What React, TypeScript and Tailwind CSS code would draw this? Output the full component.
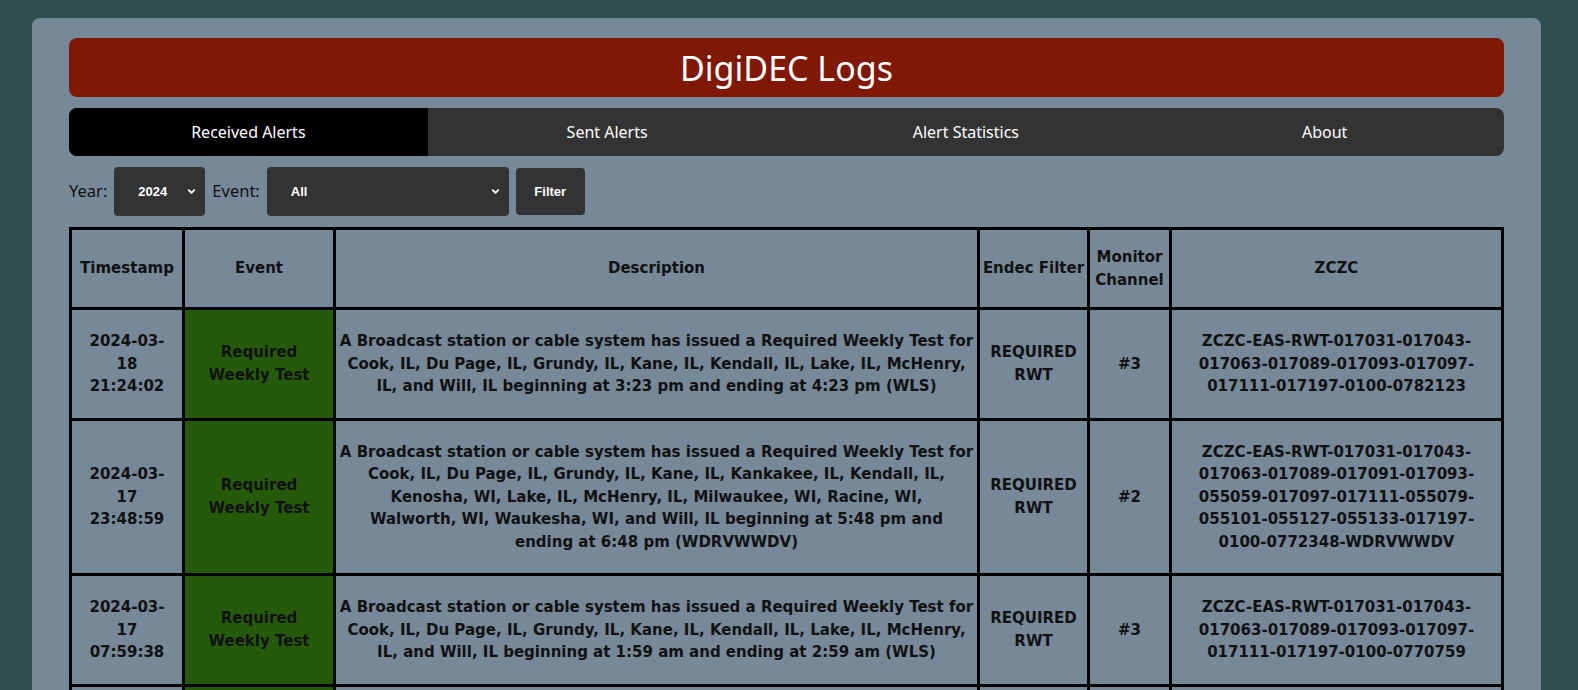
import { ChevronDown } from 'lucide-react'

const tabs = ['Received Alerts', 'Sent Alerts', 'Alert Statistics', 'About']

const rows = [
  {
    date: '2024-03-',
    day: '18',
    clock: '21:24:02',
    event: 'Required Weekly Test',
    desc: [
      'A Broadcast station or cable system has issued a Required Weekly Test for',
      'Cook, IL, Du Page, IL, Grundy, IL, Kane, IL, Kendall, IL, Lake, IL, McHenry,',
      'IL, and Will, IL beginning at 3:23 pm and ending at 4:23 pm (WLS)',
    ],
    filter: 'REQUIRED RWT',
    channel: '#3',
    zczc: 'ZCZC-EAS-RWT-017031-017043-017063-017089-017093-017097-017111-017197-0100-0782123',
  },
  {
    date: '2024-03-',
    day: '17',
    clock: '23:48:59',
    event: 'Required Weekly Test',
    desc: [
      'A Broadcast station or cable system has issued a Required Weekly Test for',
      'Cook, IL, Du Page, IL, Grundy, IL, Kane, IL, Kankakee, IL, Kendall, IL,',
      'Kenosha, WI, Lake, IL, McHenry, IL, Milwaukee, WI, Racine, WI,',
      'Walworth, WI, Waukesha, WI, and Will, IL beginning at 5:48 pm and',
      'ending at 6:48 pm (WDRVWWDV)',
    ],
    filter: 'REQUIRED RWT',
    channel: '#2',
    zczc: 'ZCZC-EAS-RWT-017031-017043-017063-017089-017091-017093-055059-017097-017111-055079-055101-055127-055133-017197-0100-0772348-WDRVWWDV',
  },
  {
    date: '2024-03-',
    day: '17',
    clock: '07:59:38',
    event: 'Required Weekly Test',
    desc: [
      'A Broadcast station or cable system has issued a Required Weekly Test for',
      'Cook, IL, Du Page, IL, Grundy, IL, Kane, IL, Kendall, IL, Lake, IL, McHenry,',
      'IL, and Will, IL beginning at 1:59 am and ending at 2:59 am (WLS)',
    ],
    filter: 'REQUIRED RWT',
    channel: '#3',
    zczc: 'ZCZC-EAS-RWT-017031-017043-017063-017089-017093-017097-017111-017197-0100-0770759',
  },
  {
    date: '2024-03-',
    day: '16',
    clock: '21:10:11',
    event: 'Required Weekly Test',
    desc: [
      'A Broadcast station or cable system has issued a Required Weekly Test for',
      'Cook, IL, Du Page, IL, Grundy, IL, Kane, IL, Kendall, IL, Lake, IL, McHenry,',
      'IL, and Will, IL beginning at 3:10 pm and ending at 4:10 pm (WLS)',
    ],
    filter: 'REQUIRED RWT',
    channel: '#3',
    zczc: 'ZCZC-EAS-RWT-017031-017043-017063-017089-017093-017097-017111-017197-0100-0762110',
  },
]

// zczc strings break after each dash, like the browser does
const breakDashes = (s: string) => s.replace(/-/g, '-\u200B')

function Select({ value, width }: { value: string; width: string }) {
  return (
    <div className={`relative h-[49px] ${width}`}>
      <div className="flex h-full items-center rounded-[4px] bg-[#333333] pl-[24px] text-[13px] font-bold text-white [font-family:Arial,'Liberation_Sans',sans-serif]">
        {value}
      </div>
      <ChevronDown className="absolute right-[8px] top-[19px] h-[11px] w-[11px] text-white" strokeWidth={4} />
    </div>
  )
}

export default function App() {
  return (
    <div className="min-h-screen bg-[#2f4f4f] pl-[32px] pr-[37px] pt-[18px] [font-family:'Segoe_UI','Noto_Sans',sans-serif]">
      <div className="rounded-t-[8px] bg-[#778899] px-[37px] pt-[20px] pb-[30px]">
        {/* Title */}
        <div className="flex h-[59px] items-center justify-center rounded-[8px] bg-[#801806]">
          <h1 className="text-[34px] leading-none text-white [font-family:'Noto_Sans',sans-serif]">DigiDEC Logs</h1>
        </div>

        {/* Tabs */}
        <nav className="mt-[11px] grid h-[48px] grid-cols-4 overflow-hidden rounded-[8px] bg-[#333333]">
          {tabs.map((t, i) => (
            <div
              key={t}
              className={`flex items-center justify-center text-[16px] text-white ${i === 0 ? 'bg-black' : ''}`}
            >
              {t}
            </div>
          ))}
        </nav>

        {/* Filter row */}
        <div className="mt-[11px] flex items-center gap-[7px] text-[16.5px] text-[#111]">
          <span>Year:</span>
          <Select value="2024" width="w-[91px]" />
          <span>Event:</span>
          <Select value="All" width="w-[242px]" />
          <button className="h-[47px] w-[69px] rounded-[4px] bg-[#333333] text-[13px] font-bold text-white [font-family:Arial,'Liberation_Sans',sans-serif]">
            Filter
          </button>
        </div>

        {/* Table */}
        <table className="mt-[11px] w-full table-fixed border-collapse border-[3px] border-black text-center text-[15px] font-bold leading-[22.5px] text-[#111] [font-family:'DejaVu_Sans',Verdana,sans-serif]">
          <colgroup>
            <col className="w-[113px]" />
            <col className="w-[151px]" />
            <col className="w-[644px]" />
            <col className="w-[110px]" />
            <col className="w-[82px]" />
            <col />
          </colgroup>
          <thead>
            <tr>
              {['Timestamp', 'Event', 'Description', 'Endec Filter', 'Monitor Channel', 'ZCZC'].map((h) => (
                <th key={h} className="border-[3px] border-black px-0 py-[16px] font-bold">
                  {h}
                </th>
              ))}
            </tr>
          </thead>
          <tbody>
            {rows.map((r) => (
              <tr key={r.zczc}>
                <td className="border-[3px] border-black px-[4px] py-[20px]">
                  {r.date}
                  <br />
                  {r.day}
                  <br />
                  {r.clock}
                </td>
                <td className="border-[3px] border-black bg-[#265a0b] px-[6px] py-[20px]">{r.event}</td>
                <td className="border-[3px] border-black px-0 py-[20px]">
                  {r.desc.map((line) => (
                    <div key={line} className="whitespace-nowrap">
                      {line}
                    </div>
                  ))}
                </td>
                <td className="border-[3px] border-black px-[4px] py-[20px]">{r.filter}</td>
                <td className="border-[3px] border-black px-[4px] py-[20px]">{r.channel}</td>
                <td className="border-[3px] border-black px-[10px] py-[20px]">{breakDashes(r.zczc)}</td>
              </tr>
            ))}
          </tbody>
        </table>
      </div>
    </div>
  )
}
